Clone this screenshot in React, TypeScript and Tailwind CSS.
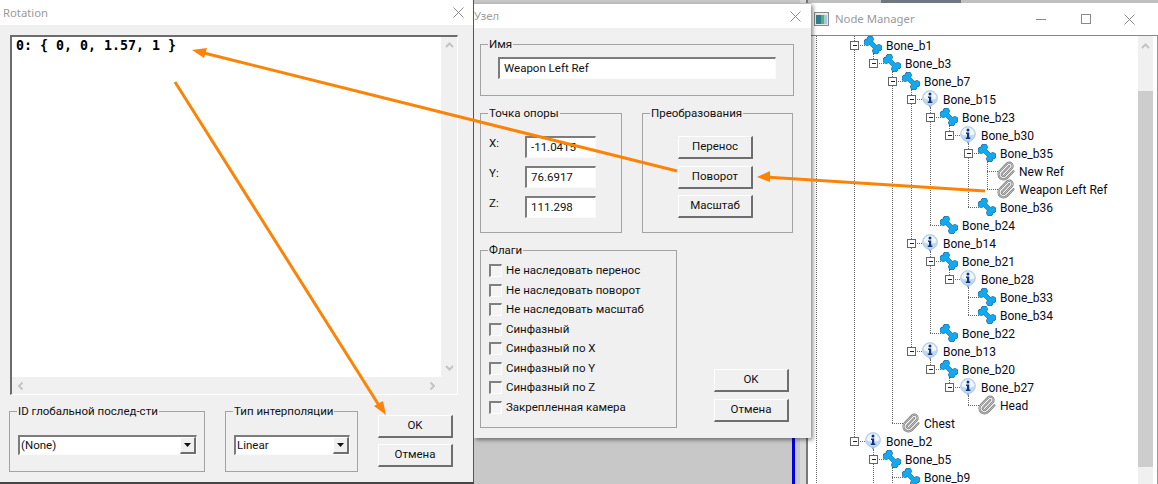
type Kind = "bone" | "info" | "clip";

interface Node {
  level: number;
  name: string;
  kind: Kind;
  open?: boolean;
}

const nodes: Node[] = [
  { level: 0, name: "Bone_b1", kind: "bone", open: true },
  { level: 1, name: "Bone_b3", kind: "bone", open: true },
  { level: 2, name: "Bone_b7", kind: "bone", open: true },
  { level: 3, name: "Bone_b15", kind: "info", open: true },
  { level: 4, name: "Bone_b23", kind: "bone", open: true },
  { level: 5, name: "Bone_b30", kind: "info", open: true },
  { level: 6, name: "Bone_b35", kind: "bone", open: true },
  { level: 7, name: "New Ref", kind: "clip" },
  { level: 7, name: "Weapon Left Ref", kind: "clip" },
  { level: 6, name: "Bone_b36", kind: "bone" },
  { level: 4, name: "Bone_b24", kind: "bone" },
  { level: 3, name: "Bone_b14", kind: "info", open: true },
  { level: 4, name: "Bone_b21", kind: "bone", open: true },
  { level: 5, name: "Bone_b28", kind: "info", open: true },
  { level: 6, name: "Bone_b33", kind: "bone" },
  { level: 6, name: "Bone_b34", kind: "bone" },
  { level: 4, name: "Bone_b22", kind: "bone" },
  { level: 3, name: "Bone_b13", kind: "info", open: true },
  { level: 4, name: "Bone_b20", kind: "bone", open: true },
  { level: 5, name: "Bone_b27", kind: "info", open: true },
  { level: 6, name: "Head", kind: "clip" },
  { level: 2, name: "Chest", kind: "clip" },
  { level: 0, name: "Bone_b2", kind: "info", open: true },
  { level: 1, name: "Bone_b5", kind: "bone", open: true },
  { level: 2, name: "Bone_b9", kind: "bone" },
];

const flags = [
  "Не наследовать перенос",
  "Не наследовать поворот",
  "Не наследовать масштаб",
  "Синфазный",
  "Синфазный по X",
  "Синфазный по Y",
  "Синфазный по Z",
  "Закрепленная камера",
];

// the list runs on below the window, so levels 1 and 2 stay open at the end
const hasNextSibling = (i: number, level: number) => {
  for (let j = i + 1; j < nodes.length; j++) {
    if (nodes[j].level === level) return true;
    if (nodes[j].level < level) return false;
  }
  return level === 1 || level === 2;
};

const BoneIcon = () => (
  <svg width="18" height="18" viewBox="0 0 18 18" className="shrink-0">
    <g stroke="#14587e" fill="#14587e">
      <line x1="5" y1="5" x2="13" y2="13" strokeWidth="4.6" />
      <circle cx="3.2" cy="6.2" r="3.1" />
      <circle cx="6.2" cy="3.2" r="3.1" />
      <circle cx="11.8" cy="14.8" r="3.1" />
      <circle cx="14.8" cy="11.8" r="3.1" />
    </g>
    <g fill="#14a8ee">
      <line x1="5" y1="5" x2="13" y2="13" stroke="#14a8ee" strokeWidth="4" />
      <circle cx="3.2" cy="6.2" r="3" />
      <circle cx="6.2" cy="3.2" r="3" />
      <circle cx="11.8" cy="14.8" r="3" />
      <circle cx="14.8" cy="11.8" r="3" />
    </g>
  </svg>
);

const InfoIcon = () => (
  <svg width="18" height="18" viewBox="0 0 18 18" className="shrink-0">
    <path d="M6.500 13.500l2.500 4.500 2.500-4.500z" fill="#6f9bcc" />
    <circle cx="9" cy="8" r="7.400" fill="#bcd8f3" stroke="#a9c6e6" strokeWidth="0.800" />
    <path d="M2.600 8a6.400 6.400 0 0 1 12.800 0c-2 2-10.800 2-12.800 0z" fill="#f4f9fe" opacity="0.900" />
    <circle cx="9" cy="4" r="1.500" fill="#14307f" />
    <path d="M7 6.600h3.200v5h1.100V13H6.800v-1.400H8V8H7z" fill="#14307f" />
  </svg>
);

const clipPath =
  "M16 6l-8.414 8.586a2 2 0 0 0 2.828 2.828l8.414-8.586a4 4 0 0 0-5.656-5.656l-8.415 8.585a6 6 0 1 0 8.486 8.486L21 12.300";

const ClipIcon = () => (
  <svg width="20" height="20" viewBox="0 0 24 24" fill="none" className="-ml-[1px] -mr-[1px] shrink-0">
    <path d={clipPath} stroke="#7f7f7f" strokeWidth="2.600" strokeLinecap="round" />
    <path d={clipPath} stroke="#e2e2e2" strokeWidth="0.800" strokeLinecap="round" />
  </svg>
);

const icons = { bone: BoneIcon, info: InfoIcon, clip: ClipIcon };

const TreeRow = ({ node, index }: { node: Node; index: number }) => {
  const Glyph = icons[node.kind];
  const x = 46 + node.level * 19;
  const guides: number[] = [];
  for (let k = 0; k < node.level; k++) {
    if (hasNextSibling(index, k)) guides.push(46 + k * 19);
  }
  return (
    <div className="relative flex h-[18px] items-center" style={{ paddingLeft: x + 10 }}>
      <svg width="330" height="18" className="absolute left-0 top-0" shapeRendering="crispEdges">
        <g stroke="#666" strokeDasharray="1 1">
          <line x1="8.500" y1="0" x2="8.500" y2="18" />
          {guides.map((g) => (
            <line key={g} x1={g + 0.5} y1="0" x2={g + 0.5} y2="18" />
          ))}
          <line x1={x + 0.5} y1="0" x2={x + 0.5} y2={hasNextSibling(index, node.level) ? 18 : 9} />
          <line x1={x} y1="9.500" x2={x + 11} y2="9.500" />
          {node.open && <line x1={x + 19.5} y1="13" x2={x + 19.5} y2="18" />}
        </g>
        {node.open && (
          <g>
            <rect x={x - 3.5} y="5.500" width="8" height="8" fill="#fff" stroke="#666" />
            <line x1={x - 1} y1="9.500" x2={x + 3} y2="9.500" stroke="#222" />
          </g>
        )}
      </svg>
      <div className="relative flex items-center">
        <Glyph />
        <span className="ml-[4px] whitespace-nowrap pt-[1px] text-[12px] text-[#0a0a20]">{node.name}</span>
      </div>
    </div>
  );
};

const CloseIcon = ({ color = "#8a8a8a" }: { color?: string }) => (
  <svg width="11" height="11" viewBox="0 0 11 11" stroke={color} fill="none">
    <path d="M0.500 0.500l10 10M10.500 0.500l-10 10" />
  </svg>
);

const Group = ({
  label,
  className,
  children,
}: {
  label: string;
  className: string;
  children?: React.ReactNode;
}) => (
  <div className={`relative shrink-0 border border-[#a3a3a3] ${className}`}>
    <span className="absolute left-[7px] top-[-9px] bg-[#f0f0f0] px-[1px] text-[11.5px] leading-[16px] whitespace-nowrap text-[#111]">
      {label}
    </span>
    {children}
  </div>
);

const WinButton = ({ label }: { label: string }) => (
  <button
    type="button"
    className="flex h-[23px] w-[75px] items-center justify-center border-t border-l border-t-white border-l-white border-r-2 border-b-2 border-r-[#6e6e6e] border-b-[#6e6e6e] bg-[#f0f0f0] text-[11.5px] text-[#111]"
  >
    {label}
  </button>
);

const Field = ({ value, className }: { value: string; className: string }) => (
  <div
    className={`flex h-[22px] items-center border-t-2 border-l-2 border-t-[#7c7c7c] border-l-[#7c7c7c] border-r border-b border-r-[#fafafa] border-b-[#fafafa] bg-white pl-[4px] text-[11.5px] whitespace-nowrap text-[#111] ${className}`}
  >
    {value}
  </div>
);

const Combo = ({ value, className }: { value: string; className: string }) => (
  <div
    className={`flex h-[20px] items-center justify-between border-t-2 border-l-2 border-t-[#7c7c7c] border-l-[#7c7c7c] border-r border-b border-r-[#fafafa] border-b-[#fafafa] bg-white pl-[1px] text-[11.5px] text-[#111] ${className}`}
  >
    {value}
    <span className="flex h-[17px] w-[16px] items-center justify-center border border-r-2 border-b-2 border-t-white border-l-white border-r-[#6e6e6e] border-b-[#6e6e6e] bg-[#f0f0f0]">
      <svg width="7" height="4" viewBox="0 0 7 4">
        <path d="M0 0h7L3.500 4z" fill="#111" />
      </svg>
    </span>
  </div>
);

const FormRow = ({ axis, value }: { axis: string; value: string }) => (
  <div className="flex h-[22px] items-start">
    <span className="w-[44px] pl-[8px] text-[11.5px] leading-[14px] text-[#111]">{axis}</span>
    <Field value={value} className="w-[71px]" />
  </div>
);

const Chevron = ({ className }: { className: string }) => (
  <svg width="9" height="6" viewBox="0 0 9 6" fill="none" stroke="#c4c4c4" strokeWidth="2" className={className}>
    <path d="M1 5l3.500-3.500L8 5" />
  </svg>
);

export default function App() {
  return (
    <div className="relative h-[484px] w-[1158px] overflow-hidden bg-[#c8c8c8] font-['Roboto',sans-serif]">
      {/* blue line of the viewport behind the dialogs */}
      <div className="absolute left-[792px] top-[430px] h-[54px] w-[3px] bg-[#0000e0]" />
      <div className="absolute left-[800px] top-0 h-[484px] w-[8px] border-r-2 border-r-[#777] bg-[#d8d8d8]" />

      {/* Node Manager */}
      <div className="absolute left-[808px] top-0 flex h-[484px] w-[350px] flex-col bg-white">
        <div className="h-[3px] bg-[#c0c0c0]">
          <div className="ml-[73px] h-[3px] w-[80px] bg-[#6f7880]" />
        </div>
        <div className="flex h-[33px] items-center border-b border-b-[#888] bg-white pl-[6px]">
          <svg width="15" height="14" viewBox="0 0 15 14" className="shrink-0">
            <rect x="0.500" y="0.500" width="14" height="13" fill="#e8e8e8" stroke="#888" />
            <rect x="2" y="3" width="5" height="9" fill="#2f7f88" />
            <rect x="7" y="3" width="3" height="9" fill="#58b070" />
            <rect x="10" y="3" width="3" height="9" fill="#a8c8e0" />
          </svg>
          <span className="ml-[6px] font-['Noto_Sans',sans-serif] text-[11.3px] text-[#9a9a9a]">Node Manager</span>
          <div className="ml-auto flex items-center pr-[23px]">
            <div className="h-px w-[10px] bg-[#8a8a8a]" />
            <div className="ml-[35px] h-[10px] w-[10px] border border-[#8a8a8a]" />
            <div className="ml-[33px]">
              <CloseIcon />
            </div>
          </div>
        </div>
        <div className="flex min-h-0 flex-1">
          <div className="w-[330px] overflow-hidden">
            {nodes.map((node, i) => (
              <TreeRow key={node.name} node={node} index={i} />
            ))}
          </div>
          <div className="flex w-[15px] flex-col bg-[#f0f0f0]">
            <div className="flex h-[55px] justify-center pt-[7px]">
              <Chevron className="" />
            </div>
            <div className="h-[376px] bg-[#cdcdcd]" />
          </div>
          <div className="w-[5px] border-r border-r-[#999] bg-white" />
        </div>
      </div>

      {/* Узел */}
      <div className="absolute left-[474px] top-[3px] flex h-[435px] w-[337px] flex-col bg-[#f0f0f0] shadow-[2px_2px_4px_rgba(0,0,0,0.45)]">
        <div className="flex h-[25px] items-center justify-between border-t border-t-[#bbb] bg-white pr-[10px]">
          <span className="font-['Noto_Sans',sans-serif] text-[11.3px] text-[#a0a0a0]">Узел</span>
          <CloseIcon />
        </div>
        <div className="flex flex-col px-[6px] pt-[16px]">
          <Group label="Имя" className="h-[52px] w-[314px] pl-[17px] pt-[12px]">
            <Field value="Weapon Left Ref" className="w-[278px]" />
          </Group>
          <div className="mt-[17px] flex gap-[20px]">
            <Group label="Точка опоры" className="flex h-[120px] w-[142px] flex-col gap-[8px] pt-[22px]">
              <FormRow axis="X:" value="-11.0415" />
              <FormRow axis="Y:" value="76.6917" />
              <FormRow axis="Z:" value="111.298" />
            </Group>
            <Group label="Преобразования" className="flex h-[120px] w-[151px] flex-col gap-[6.5px] pl-[35px] pt-[22px]">
              <WinButton label="Перенос" />
              <WinButton label="Поворот" />
              <WinButton label="Масштаб" />
            </Group>
          </div>
          <div className="mt-[17px] flex">
            <Group label="Флаги" className="h-[178px] w-[197px] pl-[8px] pt-[10px]">
              {flags.map((flag) => (
                <div key={flag} className="flex h-[19.5px] items-center">
                  <span className="h-[13px] w-[13px] shrink-0 border-t-2 border-l-2 border-t-[#808080] border-l-[#808080] border-r border-b border-r-white border-b-white bg-[#f4f4f4]" />
                  <span className="ml-[4px] text-[11.5px] whitespace-nowrap text-[#111]">{flag}</span>
                </div>
              ))}
            </Group>
            <div className="ml-[37px] flex flex-col gap-[7px] pt-[119px]">
              <WinButton label="OK" />
              <WinButton label="Отмена" />
            </div>
          </div>
        </div>
      </div>

      {/* Rotation */}
      <div className="absolute left-0 top-0 flex h-[484px] w-[474px] flex-col border-r border-b-2 border-r-[#555] border-b-[#444] bg-[#f0f0f0]">
        <div className="flex h-[25px] items-center justify-between bg-white pl-[3px] pr-[9px]">
          <span className="pt-[1px] font-['Noto_Sans',sans-serif] text-[11.3px] text-[#9a9a9a]">Rotation</span>
          <CloseIcon />
        </div>
        <div className="px-[10px] pt-[10px]">
          <div className="flex h-[360px] w-[448px] border-t-2 border-l-2 border-t-[#6c6c6c] border-l-[#6c6c6c] border-r border-b border-r-white border-b-white">
            <div className="flex min-w-0 flex-1 flex-col">
              <div className="flex-1 bg-white pl-[4px] pt-[1px] font-['DejaVu_Sans_Mono',monospace] text-[13.3px] leading-[16px] font-bold whitespace-pre text-black">
                {"0: { 0, 0, 1.57, 1 }"}
              </div>
              <div className="flex h-[17px] items-center justify-between bg-[#f0f0f0] px-[4px]">
                <Chevron className="-rotate-90" />
                <Chevron className="rotate-90" />
              </div>
            </div>
            <div className="flex w-[16px] flex-col items-center justify-between bg-[#f0f0f0] pb-[23px] pt-[5px]">
              <Chevron className="" />
              <Chevron className="rotate-180" />
            </div>
          </div>
          <div className="-ml-[1px] mt-[16px] flex">
            <Group label="ID глобальной послед-сти" className="h-[61px] w-[196px] pl-[8px] pt-[23px]">
              <Combo value="(None)" className="w-[179px]" />
            </Group>
            <Group label="Тип интерполяции" className="ml-[20px] h-[61px] w-[133px] pl-[8px] pt-[23px]">
              <Combo value="Linear" className="w-[116px]" />
            </Group>
            <div className="ml-[20px] flex flex-col gap-[6px] pt-[4px]">
              <WinButton label="OK" />
              <WinButton label="Отмена" />
            </div>
          </div>
        </div>
      </div>

      {/* orange arrows drawn over the screenshot */}
      <svg width="1158" height="484" className="pointer-events-none absolute left-0 top-0">
        <g stroke="#fb8408" strokeWidth="3" fill="#fb8408">
          <line x1="677" y1="171" x2="200" y2="52" />
          <line x1="175" y1="82" x2="380" y2="407" />
          <line x1="985" y1="191" x2="765" y2="177" />
        </g>
        <g fill="#fb8408">
          <path d="M192 50l15-2-3 10z" />
          <path d="M386 415l-12-9 9-5z" />
          <path d="M757 177l13-6v11z" />
        </g>
      </svg>
    </div>
  );
}
